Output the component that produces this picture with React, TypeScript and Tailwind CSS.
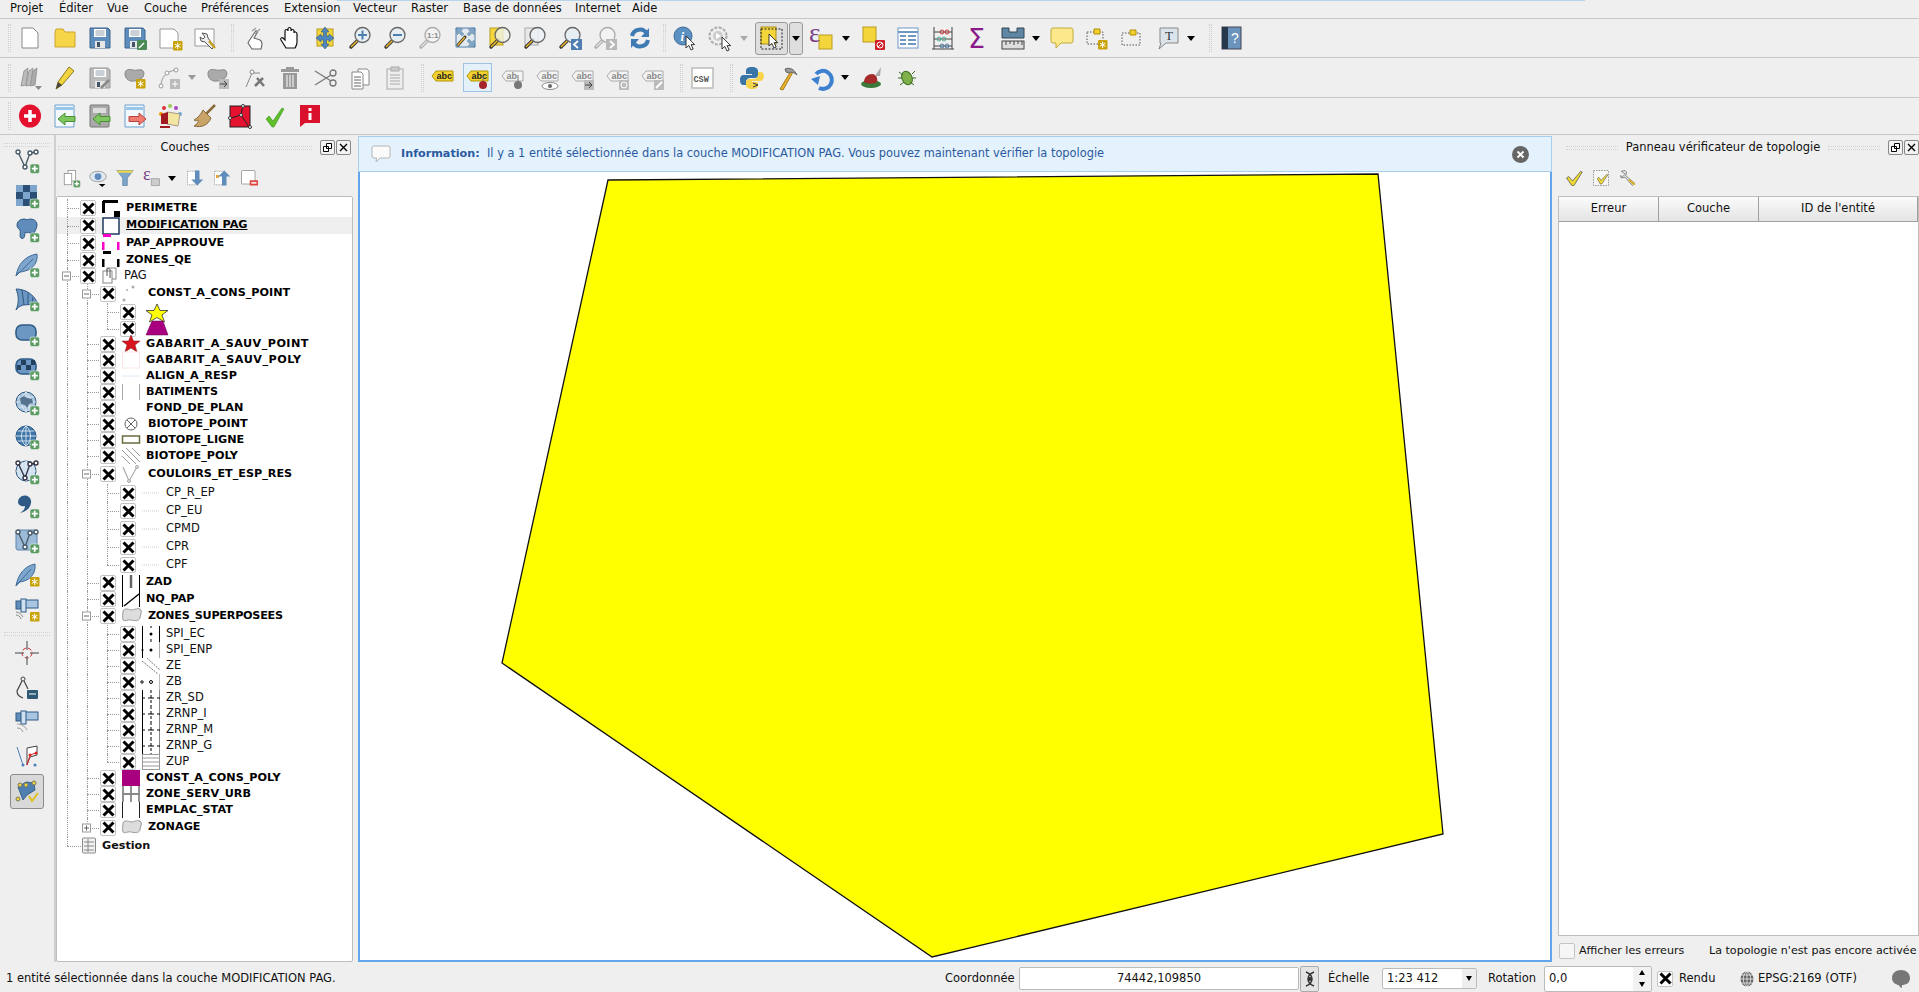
import type { ReactNode } from 'react'

// ---------- small svg helpers ----------
const Ico = ({ children, size = 24 }: { children: ReactNode; size?: number }) => (
  <svg width={size} height={size} viewBox="0 0 24 24" className="block overflow-visible">
    {children}
  </svg>
)

const Arrow = ({ x, y }: { x: number; y: number }) => (
  <path transform={`translate(${x} ${y})`} d="M0 0v12l2.800-2.600 2.200 4.600 2.200-1-2.100-4.400h3.600z" fill="#fff" stroke="#222" strokeWidth=".9" />
)
const Plus = () => (
  <g>
    <rect x="15" y="15" width="9.500" height="9.500" rx="2" fill="#5b9a62" stroke="#e8f2e8" strokeWidth=".6" />
    <path d="M19.700 16.800v6M16.800 19.700h6" stroke="#fff" strokeWidth="1.800" />
  </g>
)
const Snow = ({ x = 15, y = 15 }: { x?: number; y?: number }) => (
  <g transform={`translate(${x} ${y})`}>
    <rect width="9.500" height="9.500" rx="1" fill="#c9a208" />
    <path d="M4.700 1.500v6.500M1.900 3.100l5.600 3.300M7.500 3.100L1.900 6.400" stroke="#fff" strokeWidth="1" />
  </g>
)
const Mag = ({ fill = '#e6eef3', dim = false, children }: { fill?: string; dim?: boolean; children?: ReactNode }) => (
  <g>
    <path d="M10 14L3 21" stroke={dim ? '#aaa' : '#333'} strokeWidth="3.400" strokeLinecap="round" />
    <path d="M9.500 14.500L3.500 20.500" stroke={dim ? '#ddd' : '#e7b52c'} strokeWidth="1.600" strokeLinecap="round" />
    <circle cx="14.500" cy="9" r="7.500" fill={fill} stroke={dim ? '#aaa' : '#666'} strokeWidth="1.300" />
    {children}
  </g>
)
const Page = ({ stroke = '#888' }: { stroke?: string }) => (
  <path d="M4 2h11l5 5v15H4z" fill="#fff" stroke={stroke} strokeWidth="1" />
)
const Floppy = ({ c = '#5f8dbb', d = '#3e658e' }: { c?: string; d?: string }) => (
  <g>
    <path d="M2 2h18l2 2v18H2z" fill={c} stroke={d} />
    <rect x="6" y="3" width="12" height="8" fill="#fff" />
    <path d="M7.500 5h9M7.500 7h9M7.500 9h9" stroke="#789" strokeWidth=".8" />
    <rect x="7" y="15" width="10" height="7" fill="#e6e6e6" />
    <rect x="9" y="16" width="3" height="5" fill="#456" />
  </g>
)
const Blob = ({ c = '#aaa', d = '#888' }: { c?: string; d?: string }) => (
  <path d="M2 8c0-5 4-5 8-4 3 1 6-1 9 0 3 2 2 6 0 8-3 1-4 3-8 3-4 1-9-2-9-7z" fill={c} stroke={d} />
)
const Tag = ({ c = '#f3d22d', t = '#222', s = '#b29300', label = 'abc' }: { c?: string; t?: string; s?: string; label?: string }) => (
  <g>
    <path d="M5 5h17v10H5L1 10z" fill={c} stroke={s} />
    <text x="5.500" y="13" fontSize="9" fontWeight="700" fontFamily="Liberation Sans, sans-serif" fill={t}>{label}</text>
  </g>
)
const Globe = ({ c = '#3e75a8' }: { c?: string }) => (
  <g>
    <circle cx="11" cy="11" r="10" fill={c} stroke="#2c5880" />
    <path d="M1 11h20M3 6h16M3 16h16M11 1v20M11 1c-6 5-6 15 0 20M11 1c6 5 6 15 0 20" stroke="#dfeaf3" strokeWidth=".9" fill="none" />
  </g>
)
const Vee = ({ c = '#4a5a68' }: { c?: string }) => (
  <g fill="#fff" stroke={c} strokeWidth="1.400">
    <path d="M3 3l7 15 5-14 6-1" fill="none" />
    <circle cx="3" cy="3" r="2" /><circle cx="10" cy="18" r="2" /><circle cx="15" cy="4" r="2" /><circle cx="21" cy="3" r="2" />
  </g>
)
const Checker = ({ c = '#2c4f76', l = '#7ea6cc' }: { c?: string; l?: string }) => (
  <g>
    {[0, 1, 2].map((r) =>
      [0, 1, 2].map((q) => <rect key={`${r}${q}`} x={1 + q * 7} y={1 + r * 7} width="7" height="7" fill={(r + q) % 2 ? c : l} />)
    )}
  </g>
)

// ---------- toolbar icons ----------
const icons: Record<string, ReactNode> = {
  new: <Page />,
  open: <path d="M2 6l1-3h7l2 3h10v15H2z" fill="#f7d548" stroke="#c9a530" />,
  save: <Floppy />,
  saveas: <g><Floppy /><rect x="14" y="14" width="10" height="10" rx="1" fill="#4c8a55" /><path d="M16 22l5-5" stroke="#fff" strokeWidth="1.500" /></g>,
  print: <g><path d="M2 3h14l4 4v15H2z" fill="#fff" stroke="#999" /><Snow /></g>,
  manager: <g><path d="M2 3h19v17H2z" fill="#fff" stroke="#999" /><path d="M9 7l5 1 1 4 6 8-2 3-7-7-4-1-1-4 3 2 2-2z" fill="#eee" stroke="#555" /><path d="M16 15l6 7" stroke="#c9a020" strokeWidth="2.400" /></g>,
  touch: <g fill="none" stroke="#666" strokeWidth="1.100"><path d="M6 15l6-9c1-2 3-1 2 1l-3 5 6 2c2 1 2 3 2 5l-1 4H9l-4-6z" fill="#fff" /><path d="M9 5l4-3M12 8l5-5" stroke="#999" /></g>,
  pan: <path d="M8 22l-5-8c-1-2 1-3 2-2l2 2V5c0-2 3-2 3 0V3c0-2 3-2 3 0v2c0-2 3-2 3 0v2c0-2 3-1 3 1v8c0 3-1 4-2 6z" fill="#fff" stroke="#111" strokeWidth="1.200" />,
  pansel: <g><rect x="4" y="3" width="16" height="17" fill="#f4d63c" stroke="#b79b1c" /><path d="M12 1l4 5h-2.500v4H16V8l5 4-5 4v-2h-2.500v4H16l-4 5-4-5h2.500v-4H8v2l-5-4 5-4v2h2.500V6H8z" fill="#4f86bd" stroke="#2e5a87" strokeWidth=".6" /></g>,
  zoomin: <Mag><path d="M14.500 4.500v9M10 9h9" stroke="#4d7fb0" strokeWidth="2" /></Mag>,
  zoomout: <Mag><path d="M10 9h9" stroke="#4d7fb0" strokeWidth="2" /></Mag>,
  zoom11: <Mag fill="#f3f3f3" dim><text x="9" y="12" fontSize="8" fontWeight="700" fontFamily="Liberation Sans, sans-serif" fill="#888">1:1</text></Mag>,
  zoomfull: <g><path d="M3 2l7 1-2 2 3 3-2 2-3-3-2 2zM22 2l-1 7-2-2-3 3-2-2 3-3-2-2zM22 21l-7-1 2-2-3-3 2-2 3 3 2-2z" fill="#4f7ea8" stroke="#2e5a87" strokeWidth=".5" /><path d="M3 2h19v19H3z" fill="#cfe0ee66" stroke="#4f7ea8" /><path d="M12 11L5 19" stroke="#333" strokeWidth="3" strokeLinecap="round" /><path d="M11.500 11.500L5 19" stroke="#e7b52c" strokeWidth="1.500" strokeLinecap="round" /></g>,
  zoomsel: <g><rect x="2" y="2" width="13" height="17" fill="#f4d63c" stroke="#b79b1c" /><Mag fill="#eef2e6cc" /></g>,
  zoomlayer: <g><rect x="2" y="2" width="13" height="17" fill="#e8e8e8" stroke="#aaa" /><Mag fill="#eef2f6cc" /></g>,
  zoomlast: <g><Mag /><rect x="13" y="13" width="11" height="11" fill="#4f7eb3" /><path d="M20 15l-4 3.500 4 3.500" stroke="#fff" strokeWidth="1.800" fill="none" /></g>,
  zoomnext: <g><Mag dim fill="#f3f3f3" /><rect x="13" y="13" width="11" height="11" fill="#b8b8b8" /><path d="M17 15l4 3.500-4 3.500" stroke="#fff" strokeWidth="1.800" fill="none" /></g>,
  refresh: <g fill="none" strokeWidth="4"><path d="M4 10a8 8 0 0 1 15-2" stroke="#3f7ab3" /><path d="M20 14a8 8 0 0 1-15 2" stroke="#3f7ab3" /><path d="M21 2v9h-8zM3 22v-9h8z" fill="#3f7ab3" stroke="none" /></g>,
  identify: <g><circle cx="10" cy="10" r="9" fill="#5c8fc2" stroke="#3d6a96" /><text x="7.500" y="15" fontSize="13" fontWeight="700" fontStyle="italic" fontFamily="Liberation Serif, serif" fill="#fff">i</text><Arrow x={13} y={10} /></g>,
  action: <g><circle cx="10" cy="10" r="8.500" fill="#eee" stroke="#aaa" strokeWidth="2" strokeDasharray="3 1.500" /><circle cx="10" cy="10" r="5" fill="#ccc" /><path d="M8 7l5 3-5 3z" fill="#fff" /><Arrow x={14} y={11} /></g>,
  select: <g><rect x="1" y="1" width="15" height="17" fill="#f4d63c" stroke="#a88f14" /><rect x="1" y="3" width="21" height="20" fill="none" stroke="#222" strokeDasharray="2 1.500" /><Arrow x={9} y={8} /></g>,
  expr: <g><rect x="9" y="9" width="13" height="14" fill="#f4d63c" stroke="#b79b1c" /><text x="-1" y="16" fontSize="27" fontFamily="Liberation Serif, serif" fill="#7a3f87">&#949;</text></g>,
  deselect: <g><rect x="2" y="1" width="13" height="15" fill="#f4d63c" stroke="#b79b1c" /><rect x="14" y="14" width="10" height="10" rx="1" fill="#d0202a" /><circle cx="19" cy="19" r="3" fill="none" stroke="#fff" /><path d="M17 21l4-4" stroke="#fff" /></g>,
  table: <g><rect x="2" y="2" width="20" height="20" fill="#fff" stroke="#6b98c4" /><path d="M2 6h20M4 10h6M12 10h8M4 14h6M12 14h8M4 18h6M12 18h8" stroke="#6b98c4" strokeWidth="2" /></g>,
  stats: <g fill="none"><path d="M3 1v22M21 1v22M1 23h22M3 6h18M3 13h18M3 20h18" stroke="#444" /><circle cx="11" cy="6" r="2" stroke="#c33" /><circle cx="16" cy="6" r="2" stroke="#c33" /><circle cx="8" cy="13" r="2" stroke="#5a9" /><circle cx="13" cy="13" r="2" stroke="#5a9" /><circle cx="11" cy="20" r="2" stroke="#47a" /><circle cx="16" cy="20" r="2" stroke="#47a" /></g>,
  sigma: <text x="2" y="22" fontSize="27" fontFamily="DejaVu Sans, sans-serif" fill="#8a1a8a">&#931;</text>,
  measure: <g><path d="M1 2h7v4h8V2h7v10H1z" fill="#5f87a3" stroke="#345" /><rect x="1" y="15" width="22" height="8" fill="#ddd" stroke="#444" /><path d="M5 15v4M9 15v3M13 15v4M17 15v3M21 15v4" stroke="#444" /></g>,
  tip: <path d="M3 2h18a2 2 0 0 1 2 2v11a2 2 0 0 1-2 2H11l-5 5v-5H3a2 2 0 0 1-2-2V4a2 2 0 0 1 2-2z" fill="#fbe98c" stroke="#c3a93a" />,
  annot: <g><rect x="2" y="6" width="16" height="12" fill="none" stroke="#555" strokeDasharray="1.500 1.500" /><path d="M9 6V3h6v5H9z" fill="#f0d030" stroke="#b09000" /><Snow x={13} y={14} /></g>,
  annot2: <g><rect x="2" y="7" width="18" height="12" fill="none" stroke="#555" strokeDasharray="1.500 1.500" /><path d="M10 7V4h6v5h-6z" fill="#f0d030" stroke="#b09000" /></g>,
  text: <g><path d="M3 2h18v15H9l-7 6 2-6H3z" fill="#dbe4ea" stroke="#888" /><text x="8" y="14" fontSize="13" fontFamily="Liberation Serif, serif" fill="#333">T</text></g>,
  help: <g><rect x="3" y="1" width="19" height="22" fill="#6b94bd" stroke="#445" /><rect x="3" y="1" width="6" height="22" fill="#25384c" /><text x="12" y="17" fontSize="14" fontFamily="Liberation Sans, sans-serif" fill="#fff">?</text></g>,
  // second row
  edits: <g stroke="#999" fill="#bbb"><path d="M3 20l3-15 4-3-2 17zM8 20l3-15 4-3-2 17z" /><path d="M12 20l3-15 4-3-2 17z" fill="#aaa" /><path d="M17 20h7l-3.500 4z" fill="#888" stroke="none" /></g>,
  pencil: <g><path d="M3 23l2-7L16 1l5 4L9 19z" fill="#f1d340" stroke="#8a7a20" /><path d="M3 23l2-7 4 3z" fill="#444" /></g>,
  savegray: <g><Floppy c="#bbb" d="#999" /><path d="M13 22l8-8" stroke="#888" strokeWidth="2.500" /></g>,
  addfeat: <g><Blob /><Snow x={13} y={13} /></g>,
  vert: <g stroke="#999" fill="#fff"><path d="M3 20c0-9 6-15 15-16" fill="none" /><circle cx="3" cy="20" r="2" /><circle cx="9" cy="7" r="2" /><circle cx="18" cy="4" r="2" /><rect x="12" y="13" width="10" height="10" fill="#bbb" stroke="none" /><path d="M17 15v6M14 18h6" stroke="#fff" /></g>,
  movefeat: <g><Blob /><rect x="13" y="13" width="10" height="10" fill="#bbb" /><path d="M14 18h6M18 15l3 3-3 3" stroke="#444" fill="none" /></g>,
  nodes: <g><path d="M3 21l6-14M9 7l8 0" stroke="#888" fill="none" /><circle cx="9" cy="6" r="2" fill="#fff" stroke="#888" /><path d="M12 20l8-8M14 12l7 8" stroke="#777" strokeWidth="2.500" /></g>,
  trash: <g fill="#999"><rect x="8" y="1" width="8" height="3" /><rect x="3" y="3" width="18" height="3" /><path d="M5 7h14v16H5z" /><path d="M9 9v12M12 9v12M15 9v12" stroke="#eee" strokeWidth="1.200" /></g>,
  cut: <g fill="none" stroke="#777" strokeWidth="1.300"><path d="M2 5l16 10M2 19l16-10" /><circle cx="20" cy="7" r="3" /><circle cx="20" cy="17" r="3" /></g>,
  copy: <g stroke="#888" fill="#fff"><path d="M10 3h9l2 2v14H10z" /><path d="M4 6h9l2 2v15H4z" /><path d="M6 11h7M6 14h7M6 17h7M6 20h7" stroke="#666" /></g>,
  paste: <g stroke="#aaa" fill="#eee"><rect x="4" y="3" width="16" height="20" /><rect x="8" y="1" width="8" height="4" fill="#ccc" /><path d="M7 9h10M7 12h10M7 15h10M7 18h10" /></g>,
  abc: <Tag />,
  abcpin: <g><Tag /><path d="M17 10v6" stroke="#777" /><circle cx="17" cy="19" r="4" fill="#a5232a" /></g>,
  abcgray: <g><Tag c="#f4f4f4" t="#888" s="#aaa" label="ab" /><path d="M17 9v6" stroke="#777" /><circle cx="17" cy="19" r="4" fill="#777" /></g>,
  abceye: <g><Tag c="#f4f4f4" t="#888" s="#aaa" /><ellipse cx="14" cy="20" rx="8" ry="3.500" fill="#fff" stroke="#888" /><circle cx="14" cy="20" r="2" fill="#666" /></g>,
  abcmove: <g><Tag c="#f4f4f4" t="#888" s="#aaa" /><rect x="13" y="14" width="10" height="10" fill="#bbb" /><path d="M14 19h6M18 16l3 3-3 3" stroke="#444" fill="none" /></g>,
  abcrot: <g><Tag c="#f4f4f4" t="#888" s="#aaa" /><rect x="13" y="14" width="10" height="10" fill="#bbb" /><circle cx="18" cy="19" r="3" fill="none" stroke="#fff" /></g>,
  abcedit: <g><Tag c="#f4f4f4" t="#888" s="#aaa" /><rect x="13" y="14" width="10" height="10" fill="#bbb" /><path d="M15 22l6-6" stroke="#fff" strokeWidth="2" /></g>,
  csw: <g><rect x="2" y="2" width="21" height="20" fill="#fff" stroke="#bbb" strokeWidth="1.500" /><text x="3.500" y="15.500" fontSize="8.500" fontWeight="700" fontFamily="Liberation Mono, monospace" fill="#555">CSW</text></g>,
  python: <g><path d="M12 1c-5 0-6 2-6 4v3h6v1H4c-3 0-4 2-4 5s1 5 4 5h2v-3c0-2 2-4 4-4h5c2 0 3-1 3-3V5c0-2-2-4-6-4z" fill="#3a75a8" /><path d="M12 23c5 0 6-2 6-4v-3h-6v-1h8c2 0 4-2 4-5 0-2-1-4-4-4h-2v3c0 2-2 4-4 4H9c-2 0-3 1-3 3v3c0 2 2 4 6 4z" fill="#f8d44c" /><path d="M13 17l5 2-5 2" stroke="#333" fill="none" /></g>,
  hammer: <g><path d="M5 23l11-18 2 1L8 24z" fill="#e8b12e" stroke="#a97a14" /><path d="M10 3c5-2 9 0 12 6-3-3-6-3-8-2l-3-1z" fill="#999" stroke="#666" /></g>,
  undo: <g fill="none"><path d="M6 8a9 9 0 1 1 3 14" stroke="#3d80d0" strokeWidth="4" /><path d="M1 13l9-3-2 9z" fill="#3d80d0" /></g>,
  meat: <g><ellipse cx="11" cy="18" rx="10" ry="4" fill="#3a7a3a" /><path d="M4 16c0-5 4-8 8-8 4 0 6 4 5 8-3 2-10 2-13 0z" fill="#a52a2a" /><path d="M15 10l6-9-1 9z" fill="#aaa" /></g>,
  bug: <g stroke="#3a6b1e"><ellipse cx="12" cy="12" rx="5" ry="7" fill="#7fb04a" transform="rotate(-25 12 12)" /><path d="M4 6l4 3M3 12h4M5 19l4-3M20 5l-3 3M21 12h-4M19 19l-4-3" fill="none" /></g>,
  // third row
  addred: <g><ellipse cx="12" cy="12" rx="11" ry="11.500" fill="#e4112f" /><path d="M12 6v12M6 12h12" stroke="#fff" strokeWidth="3.500" /></g>,
  arrowin: <g><path d="M2 1h19v22H2z" fill="#f2f8fc" stroke="#6aa0cf" /><rect x="3" y="3" width="17" height="3" fill="#9ac6ea" /><path d="M5 15l7-6v3.500h10v5H12V21z" fill="#7ec660" stroke="#4b8f35" /></g>,
  arrowcab: <g><rect x="2" y="1" width="19" height="22" rx="1" fill="#aaa" stroke="#777" /><rect x="5" y="4" width="13" height="5" fill="#ddd" /><path d="M5 15l7-6v3.500h10v5H12V21z" fill="#7ec660" stroke="#4b8f35" /></g>,
  arrowout: <g><path d="M2 1h19v22H2z" fill="#f2f8fc" stroke="#6aa0cf" /><rect x="3" y="3" width="17" height="3" fill="#9ac6ea" /><path d="M23 15l-7-6v3.500H6v5h10V21z" fill="#f07a70" stroke="#b6463d" /></g>,
  paint: <g><circle cx="6" cy="4" r="2" fill="#d33" /><circle cx="12" cy="2" r="2" fill="#9c5" /><circle cx="18" cy="4" r="2" fill="#a4c" /><circle cx="22" cy="10" r="2" fill="#6ad" /><circle cx="3" cy="10" r="2" fill="#e90" /><path d="M9 8l13 2-2 12-11-2z" fill="#f3e6a0" stroke="#a98" /><path d="M3 10l7-2v12H3z" fill="#a01c22" /><path d="M2 23h10" stroke="#a01c22" strokeWidth="2" /></g>,
  broom: <g><path d="M22 1L12 11" stroke="#8a6a3a" strokeWidth="2.500" /><path d="M10 6l8 8c-3 7-9 10-17 8 3-2 5-4 4-6-2 1-3 1-4 0 4-2 7-6 9-10z" fill="#c8a468" stroke="#8a6a3a" /></g>,
  polyred: <g><rect x="2" y="2" width="20" height="21" fill="#e4112f" stroke="#222" /><path d="M15 1l-2 10-10 3M13 11l8 12" stroke="#222" fill="none" /><g fill="#fff" stroke="#333"><circle cx="15" cy="2" r="1.500" /><circle cx="2" cy="14" r="1.500" /><circle cx="13" cy="11" r="1.500" /><circle cx="22" cy="23" r="1.500" /></g></g>,
  check: <path d="M3 15l3-3 4 5 9-13 2 1-10 18H9z" fill="#5dc02a" stroke="#3d8f18" strokeWidth=".6" />,
  infored: <g><path d="M2 1h20v18H7l-5 4z" fill="#d9112c" /><rect x="10.500" y="4" width="3" height="3" fill="#fff" /><rect x="10.500" y="9" width="3" height="7" fill="#fff" /></g>,
}

// ---------- left toolbar icons ----------
const sideIcons: ReactNode[] = [
  <g key="a"><Vee /><Plus /></g>,
  <g key="b"><Checker /><Plus /></g>,
  <g key="c"><path d="M2 7c0-6 8-7 10-5 3-2 10-1 10 5 0 4-3 6-3 10-2 3-4 0-4-3-2 1-4 1-5 0 0 4-1 8-4 6-2-2 0-6-1-8-1-1-3-2-3-5z" fill="#5f8cba" stroke="#2f5a86" /><Plus /></g>,
  <g key="d"><path d="M1 23C3 11 10 3 22 1c1 7-3 15-12 17-3 1-6 1-7 2z" fill="#7ea6cc" stroke="#3f6c99" /><path d="M1 23L18 6" stroke="#3f6c99" /><Plus /></g>,
  <g key="e"><path d="M1 2c9 0 18 5 22 15l-15 1c-3 1-6 3-7 5 3-7 3-14 0-21z" fill="#6c97c2" stroke="#2f5a86" /><path d="M7 3l2 15M13 6l0 12M18 10l-1 7" stroke="#2f5a86" /><Plus /></g>,
  <g key="f"><rect x="1" y="3" width="20" height="15" rx="6" fill="#6c97c2" stroke="#2f5a86" strokeWidth="1.600" /><Plus /></g>,
  <g key="g"><rect x="1" y="3" width="20" height="15" rx="6" fill="#6c97c2" stroke="#2f5a86" strokeWidth="1.600" /><path d="M6 4h5v5H6zM11 9h5v5h-5zM16 4h4v5h-4zM2 9h4v5H2z" fill="#24405f" /><Plus /></g>,
  <g key="h"><Globe c="#a8c4dc" /><path d="M5 7l4-2 3 2 5 1 1 4-4 1-2 4-2-3-4-1z" fill="#55738f" /><Plus /></g>,
  <g key="i"><Globe /><Plus /></g>,
  <g key="j"><Globe c="#cfe0ee" /><Vee c="#334" /><Plus /></g>,
  <g key="k"><path d="M7 2c5-2 10 2 9 7-1 6-6 9-11 10 3-2 5-4 5-7-3 1-7-1-7-4 0-3 2-5 4-6z" fill="#2f5a86" /><Plus /></g>,
  <g key="l"><rect x="1" y="1" width="21" height="20" rx="2" fill="#9bbbd8" stroke="#5f86ac" /><Vee /><Plus /></g>,
  <g key="m"><path d="M1 23C3 11 10 3 20 1c1 7-3 15-11 17-3 1-5 1-6 2z" fill="#7ea6cc" stroke="#3f6c99" /><path d="M1 23L16 6" stroke="#3f6c99" /><Snow x={15} y={14} /></g>,
  <g key="n"><rect x="9" y="2" width="14" height="8" fill="#a8c6e2" stroke="#2f5a86" /><rect x="1" y="3" width="6" height="8" fill="#5f8cba" stroke="#2f5a86" /><rect x="6" y="1" width="5" height="13" fill="#cfe0ee" stroke="#2f5a86" /><path d="M1 14c3 0 5 2 7 5M1 17c2 0 4 1 5 4" stroke="#888" fill="none" /><Snow x={15} y={14} /></g>,
]
const sideIcons2: ReactNode[] = [
  <g key="a"><circle cx="12" cy="12" r="5" fill="none" stroke="#c33" strokeDasharray="4 2" /><path d="M12 0v9M12 15v9M0 12h9M15 12h9" stroke="#444" /></g>,
  <g key="b"><circle cx="8" cy="3" r="2" fill="none" stroke="#444" /><path d="M7 5l-5 10c0 4 3 6 6 7M9 5l4 8" fill="none" stroke="#444" strokeWidth="1.200" /><rect x="12" y="14" width="11" height="9" rx="1" fill="#2f5a76" /><path d="M14 18h7" stroke="#fff" /></g>,
  <g key="c"><rect x="9" y="2" width="14" height="8" fill="#a8c6e2" stroke="#2f5a86" /><rect x="1" y="3" width="6" height="8" fill="#5f8cba" stroke="#2f5a86" /><rect x="6" y="1" width="5" height="13" fill="#cfe0ee" stroke="#2f5a86" /><path d="M2 14c4 0 8 2 10 6M2 18c3 0 5 1 6 4" stroke="#999" fill="none" /></g>,
  <g key="d"><path d="M2 2l6 18" stroke="#4a7fb8" fill="none" /><path d="M12 3l10-2 0 9-7 2-3 8z" fill="#fff" stroke="#444" /><path d="M12 20l3-10 6-2" stroke="#d22" fill="none" /><circle cx="15" cy="10" r="1.500" fill="#d22" /><circle cx="21" cy="8" r="1.500" fill="#d22" /><circle cx="8" cy="20" r="1.500" fill="#4a7fb8" /><circle cx="20" cy="20" r="1.500" fill="#4a7fb8" /></g>,
  <g key="e"><path d="M3 8l8-5 8 1 1 7-8 5-4 5z" fill="#4f7fb0" stroke="#3a6288" /><g fill="#f4d63c" stroke="#776"><circle cx="5" cy="6" r="2" /><circle cx="11" cy="6" r="2" /><circle cx="19" cy="4" r="2" /><circle cx="3" cy="20" r="2" /></g><path d="M14 17l3 5 6-8" fill="none" stroke="#e0c020" strokeWidth="2" /></g>,
]

// ---------- layer tree symbols ----------
const Sym = ({ children }: { children: ReactNode }) => (
  <svg width="18" height="16" viewBox="0 0 18 16" className="block overflow-visible">{children}</svg>
)
const dash = (c: string) => (
  <g fill={c}>
    <rect x="1" y="-1" width="8" height="3" />
    <rect x="0" y="7" width="2.500" height="8" />
    <rect x="15" y="7" width="2.500" height="8" />
  </g>
)
const syms: Record<string, ReactNode> = {
  perimetre: <g><path d="M1 1.500h15M1.500 1v12" stroke="#000" strokeWidth="3" fill="none" /><rect x="12" y="11" width="6" height="6" fill="#000" /></g>,
  modif: <rect x="1" y="0" width="16" height="16" fill="#fff" stroke="#1f3a5f" strokeWidth="1.500" />,
  pap: dash('#ff00cc'),
  qe: dash('#000'),
  pag: <g fill="#fff" stroke="#888"><rect x="5" y="0" width="9" height="11" /><rect x="1" y="3" width="9" height="12" /><path d="M5 8V2c0-2 3-2 3 0v8" fill="none" stroke="#555" /></g>,
  points: <g fill="#aaa"><circle cx="2" cy="14" r="1.500" /><circle cx="5" cy="4" r="1" /><circle cx="11" cy="1" r="1.500" /></g>,
  star: <path d="M15 0l3 6.500h8l-6 4.500 2.500 7-7.500-4.500-7.500 4.500L10 11l-6-4.500h8z" fill="#ff0" stroke="#333" strokeWidth=".8" />,
  tri: <path d="M10 0h11l5 14H4z" fill="#a8007e" stroke="#60004a" strokeWidth=".5" />,
  redstar: <path d="M9 -1l2.500 6H18l-5 4 2 7-6-4-6 4 2-7-5-4h6.500z" fill="#d8141c" stroke="#7a1a20" strokeWidth=".5" />,
  gabpoly: <rect x="0.500" y="0" width="17" height="16" fill="#fff" stroke="#fde6e6" />,
  align: <path d="M0 8h18" stroke="#dce8f2" />,
  bat: <path d="M.500 0v16M17.500 0v16" stroke="#aaa" />,
  biop: <g stroke="#666" fill="#fff"><circle cx="9" cy="8" r="6" /><path d="M5 4l8 8M13 4l-8 8" /></g>,
  bligne: <g><rect x="0.500" y="4" width="17" height="7" fill="#fff" stroke="#6b6b3e" strokeWidth="1.500" /></g>,
  bpoly: <g stroke="#999"><path d="M0 2l14 14M0 8l8 8M4 0l14 14M10 0l8 8" /></g>,
  vline: <g stroke="#aaa" fill="#ddd"><path d="M1 1l6 14L15 1" fill="none" strokeWidth="1.200" /><circle cx="7" cy="15" r="1.500" /><circle cx="15" cy="1" r="1.500" /></g>,
  dots: <path d="M0 8h18" stroke="#ccc" strokeDasharray="1 1" />,
  zad: <g><path d="M.500 0v16M17.500 0v16" stroke="#000" /><path d="M9 0v13" stroke="#666" strokeWidth="2.500" /></g>,
  nq: <g><path d="M.500 0v16M17.500 0v16" stroke="#000" /><path d="M2 15L17 3" stroke="#000" strokeWidth="1.400" /></g>,
  blob: <path d="M1 3c1-3 5-2 8-1 3 0 8-3 10 0 1 3-1 5-1 8-1 3-5 3-9 2-3-1-6 2-8 0-1-3 0-6 0-9z" fill="#ddd" stroke="#999" />,
  spi: <g><path d="M.500 0v16M17.500 0v16" stroke="#000" /><path d="M9 0v2M9 13v3" stroke="#000" /><circle cx="9" cy="8" r="1.500" fill="#000" /></g>,
  spi2: <g><path d="M.500 0v16" stroke="#000" /><path d="M17.500 0v16" stroke="#aaa" /><circle cx="9" cy="8" r="1.500" fill="#000" /><circle cx="0.500" cy="8" r="1" fill="#000" /></g>,
  ze: <g stroke="#777" strokeDasharray="2 1"><path d="M0 3l16 13M5 0l13 12" /></g>,
  zb: <g fill="#fff" stroke="#000"><circle cx="9" cy="8" r="1.500" /><circle cx="0" cy="8" r="1.200" /><path d="M17.500 0v16" stroke="#bbb" /></g>,
  zr: <g stroke="#000"><path d="M.500 0v16" /><path d="M17.500 0v16" stroke="#888" /><path d="M9 0v16" strokeDasharray="3 2" /><path d="M0 8h3M6 8h6M15 8h3" /></g>,
  zup: <g stroke="#999"><rect x="0.500" y="0.500" width="17" height="15" fill="#fff" /><path d="M0 4h18M0 8h18M0 12h18" /></g>,
  cpoly: <rect x="0" y="0" width="18" height="16" fill="#a8007e" />,
  serv: <g stroke="#888" strokeWidth="1.800" fill="none"><path d="M1 0v16M9 0v16M17 0v16M0 8h18" /></g>,
  emplac: <path d="M.500 0v16M17.500 0v16" stroke="#222" />,
  gest: <g stroke="#888" fill="#f2f2f2"><rect x="0.500" y="0" width="13" height="15" rx="1" /><path d="M2 4h10M2 8h10M2 12h10M6 1v13" /></g>,
}

type Row = {
  label: string
  sym?: string
  level: 0 | 1 | 2
  h: string
  bold?: boolean
  box?: '-' | '+'
  last?: boolean
  inPag?: boolean
  selected?: boolean
  track?: string
}

const b = (label: string, sym: string, h = 'h-[16px]', extra: Partial<Row> = {}): Row => ({ label, sym, level: 1, h, bold: true, inPag: true, ...extra })
const c = (label: string, sym: string, h = 'h-[16px]', extra: Partial<Row> = {}): Row => ({ label, sym, level: 2, h, inPag: true, ...extra })

const rows: Row[] = [
  { label: 'PERIMETRE', sym: 'perimetre', level: 0, h: 'h-[18px]', bold: true },
  { label: 'MODIFICATION PAG', sym: 'modif', level: 0, h: 'h-[17px]', bold: true, selected: true },
  { label: 'PAP_APPROUVE', sym: 'pap', level: 0, h: 'h-[18px]', bold: true },
  { label: 'ZONES_QE', sym: 'qe', level: 0, h: 'h-[16px]', bold: true },
  { label: 'PAG', sym: 'pag', level: 0, h: 'h-[16px]', box: '-' },
  b('CONST_A_CONS_POINT', 'points', 'h-[19px]', { box: '-' }),
  c('', 'star', 'h-[18px]'),
  c('', 'tri', 'h-[15px]', { last: true }),
  b('GABARIT_A_SAUV_POINT', 'redstar', 'h-[16px]', { track: 'tracking-[0.450px]' }),
  b('GABARIT_A_SAUV_POLY', 'gabpoly', 'h-[16px]', { track: 'tracking-[0.500px]' }),
  b('ALIGN_A_RESP', 'align'),
  b('BATIMENTS', 'bat'),
  b('FOND_DE_PLAN', ''),
  b('BIOTOPE_POINT', 'biop'),
  b('BIOTOPE_LIGNE', 'bligne'),
  b('BIOTOPE_POLY', 'bpoly'),
  b('COULOIRS_ET_ESP_RES', 'vline', 'h-[20px]', { box: '-' }),
  c('CP_R_EP', 'dots', 'h-[18px]'),
  c('CP_EU', 'dots', 'h-[18px]'),
  c('CPMD', 'dots', 'h-[18px]'),
  c('CPR', 'dots', 'h-[18px]'),
  c('CPF', 'dots', 'h-[18px]', { last: true }),
  b('ZAD', 'zad', 'h-[17px]'),
  b('NQ_PAP', 'nq'),
  b('ZONES_SUPERPOSEES', 'blob', 'h-[18px]', { box: '-', track: 'tracking-[-0.250px]' }),
  c('SPI_EC', 'spi', 'h-[17px]'),
  c('SPI_ENP', 'spi2'),
  c('ZE', 'ze'),
  c('ZB', 'zb'),
  c('ZR_SD', 'zr'),
  c('ZRNP_I', 'zr'),
  c('ZRNP_M', 'zr'),
  c('ZRNP_G', 'zr'),
  c('ZUP', 'zup', 'h-[16px]', { last: true }),
  b('CONST_A_CONS_POLY', 'cpoly'),
  b('ZONE_SERV_URB', 'serv'),
  b('EMPLAC_STAT', 'emplac'),
  b('ZONAGE', 'blob', 'h-[19px]', { box: '+', last: true }),
]

const Cross = () => (
  <span className="flex h-4 w-4 shrink-0 items-center justify-center rounded-[2px] border border-[#c4c4c4] bg-white">
    <svg width="13" height="13" viewBox="0 0 13 13"><path d="M1.500 1.500l10 10M11.500 1.500l-10 10" stroke="#000" strokeWidth="3" /></svg>
  </span>
)

const VGuide = ({ x, half }: { x: string; half?: boolean }) => (
  <span className={`absolute top-0 w-0 border-l border-dotted border-[#999] ${x} ${half ? 'h-1/2' : 'h-full'}`} />
)

const ExpandBox = ({ x, kind }: { x: string; kind: '-' | '+' }) => (
  <span className={`absolute top-1/2 z-10 flex h-[9px] w-[9px] -translate-y-1/2 items-center justify-center border border-[#999] bg-white ${x}`}>
    <span className="h-px w-[5px] bg-[#666]" />
    {kind === '+' && <span className="absolute h-[5px] w-px bg-[#666]" />}
  </span>
)

function TreeRow({ row }: { row: Row }) {
  const pad = row.level === 0 ? 'pl-[23px]' : row.level === 1 ? 'pl-[43px]' : 'pl-[63px]'
  const tick = row.level === 0 ? 'left-[10px]' : row.level === 1 ? 'left-[30px]' : 'left-[50px]'
  const labelGap = row.label === 'PAG' ? 'ml-[4px]' : row.box || row.sym === 'biop' ? 'ml-[8px]' : 'ml-[6px]'
  return (
    <div className={`relative flex items-center ${row.h} ${pad} ${row.selected ? 'bg-[#efefef]' : ''}`}>
      <VGuide x="left-[10px]" />
      {row.inPag && <VGuide x="left-[30px]" half={row.level === 1 && row.last} />}
      {row.level === 2 && <VGuide x="left-[50px]" half={row.last} />}
      <span className={`absolute top-1/2 h-0 w-[12px] border-t border-dotted border-[#999] ${tick}`} />
      {row.box && <ExpandBox x={row.level === 0 ? 'left-[5px]' : 'left-[25px]'} kind={row.box} />}
      <span className="relative"><Cross /></span>
      <span className="relative ml-[6px] w-[18px] shrink-0">
        {row.sym ? <Sym>{syms[row.sym]}</Sym> : null}
      </span>
      <span className={`relative whitespace-nowrap ${labelGap} ${row.track ?? ''} ${row.bold ? 'text-[11.200px] font-bold text-black' : 'text-[#111]'} ${row.selected ? 'underline' : ''}`}>
        {row.label}
      </span>
    </div>
  )
}

// ---------- toolbar bits ----------
const Grip = () => <span className="mx-px h-[28px] w-[3px] shrink-0 border-x border-dotted border-[#cfcfcf]" />
const GripH = ({ className = '' }: { className?: string }) => (
  <span className={`h-[4px] border-y border-dotted border-[#d2d2d2] ${className}`} />
)
const Btn = ({ name, ml = '' }: { name: string; ml?: string }) => (
  <span className={`flex h-[35px] w-[35px] shrink-0 items-center justify-center ${ml}`}>
    <Ico>{icons[name]}</Ico>
  </span>
)
const Drop = ({ w = 'w-[12px]', color = 'border-t-black' }: { w?: string; color?: string }) => (
  <span className={`flex h-[35px] shrink-0 items-center justify-center ${w}`}>
    <span className={`h-0 w-0 border-x-[4px] border-t-[5px] border-x-transparent ${color}`} />
  </span>
)

const Close = () => (
  <svg width="9" height="9" viewBox="0 0 9 9"><path d="M1 1l7 7M8 1L1 8" stroke="#000" strokeWidth="1.400" /></svg>
)
const Float = () => (
  <svg width="9" height="9" viewBox="0 0 9 9"><path d="M3.500.500h5v5h-5zM.500 3.500h5v5h-5z" fill="#fff" stroke="#000" /></svg>
)
const DockBtns = () => (
  <span className="flex gap-px">
    <span className="flex h-[15px] w-[15px] items-center justify-center rounded-[2px] border border-[#888] bg-[#f2f2f2]"><Float /></span>
    <span className="flex h-[15px] w-[15px] items-center justify-center rounded-[2px] border border-[#888] bg-[#f2f2f2]"><Close /></span>
  </span>
)

const menu = [
  ['Projet', 'w-[49px]'], ['Éditer', 'w-[48px]'], ['Vue', 'w-[37px]'], ['Couche', 'w-[57px]'], ['Préférences', 'w-[83px]'],
  ['Extension', 'w-[69px]'], ['Vecteur', 'w-[58px]'], ['Raster', 'w-[52px]'], ['Base de données', 'w-[112px]'], ['Internet', 'w-[57px]'], ['Aide', 'w-[40px]'],
]

export default function App() {
  return (
    <div className="flex h-[992px] w-[1919px] flex-col overflow-hidden bg-[#efefef] font-['DejaVu_Sans',sans-serif] text-[11.500px] text-[#111]">
      {/* menu */}
      <div className="relative flex h-[19px] shrink-0 items-center border-b border-[#c8c8c8] pl-[10px]">
        <span className="absolute left-[337px] top-0 h-px w-[1248px] bg-[#b9d3ea]" />
        {menu.map(([m, w]) => (
          <span key={m} className={`${w} whitespace-nowrap`}>{m}</span>
        ))}
      </div>

      {/* toolbar 1 */}
      <div className="flex h-[39px] shrink-0 items-center border-b border-[#c8c8c8] pl-[7px]">
        <Grip />
        {['new', 'open', 'save', 'saveas', 'print', 'manager'].map((n) => <Btn key={n} name={n} />)}
        <span className="ml-[8px] mr-[2px] flex"><Grip /></span>
        {['touch', 'pan', 'pansel', 'zoomin', 'zoomout', 'zoom11', 'zoomfull', 'zoomsel', 'zoomlayer', 'zoomlast', 'zoomnext', 'refresh'].map((n) => <Btn key={n} name={n} />)}
        <span className="ml-[5px] flex"><Grip /></span>
        <Btn name="identify" />
        <Btn name="action" />
        <Drop w="w-[14px]" color="border-t-[#aaa]" />
        <span className="ml-[4px] flex h-[33px] w-[33px] shrink-0 items-center justify-center rounded-[3px] border border-[#9a9a9a] bg-[#dedede]"><Ico>{icons.select}</Ico></span>
        <span className="ml-px flex h-[33px] w-[14px] shrink-0 items-center justify-center rounded-[3px] border border-[#9a9a9a] bg-[#dedede]">
          <span className="h-0 w-0 border-x-[4px] border-t-[5px] border-x-transparent border-t-black" />
        </span>
        <Btn name="expr" ml="ml-px" />
        <Drop w="w-[14px]" />
        <Btn name="deselect" ml="ml-[2px]" />
        {['table', 'stats', 'sigma', 'measure'].map((n) => <Btn key={n} name={n} />)}
        <Drop />
        <Btn name="tip" ml="ml-[2px]" />
        <Btn name="annot" />
        <Btn name="annot2" />
        <Btn name="text" ml="ml-[2px]" />
        <Drop w="w-[10px]" />
        <span className="ml-[12px] flex"><Grip /></span>
        <Btn name="help" />
      </div>

      {/* toolbar 2 */}
      <div className="flex h-[40px] shrink-0 items-center border-b border-[#c8c8c8] pl-[7px]">
        <Grip />
        {['edits', 'pencil', 'savegray', 'addfeat', 'vert'].map((n) => <Btn key={n} name={n} />)}
        <Drop w="w-[10px]" color="border-t-[#999]" />
        <Btn name="movefeat" ml="ml-[3px]" />
        <Btn name="nodes" ml="ml-[2px]" />
        {['trash', 'cut', 'copy', 'paste'].map((n) => <Btn key={n} name={n} />)}
        <span className="ml-[8px] flex"><Grip /></span>
        <Btn name="abc" />
        <span className="mx-[3px] flex h-[29px] w-[29px] shrink-0 items-center justify-center border border-[#9cc2e6] bg-[#e4f0fa]"><Ico>{icons.abcpin}</Ico></span>
        {['abcgray', 'abceye', 'abcmove', 'abcrot', 'abcedit'].map((n) => <Btn key={n} name={n} />)}
        <span className="ml-[9px] flex"><Grip /></span>
        <Btn name="csw" />
        <span className="ml-[10px] flex"><Grip /></span>
        {['python', 'hammer', 'undo'].map((n) => <Btn key={n} name={n} />)}
        <Drop />
        <Btn name="meat" ml="ml-[3px]" />
        <Btn name="bug" />
      </div>

      {/* toolbar 3 */}
      <div className="flex h-[37px] shrink-0 items-center border-b border-[#c8c8c8] pl-[7px]">
        <Grip />
        {['addred', 'arrowin', 'arrowcab', 'arrowout', 'paint', 'broom', 'polyred', 'check', 'infored'].map((n) => <Btn key={n} name={n} />)}
      </div>

      <div className="flex min-h-0 flex-1">
        {/* left vertical toolbar */}
        <div className="flex w-[54px] shrink-0 flex-col items-center pt-[8px]">
          <GripH className="w-[46px]" />
          <div className="-mt-[3px] flex w-full flex-col items-center">
            {sideIcons.map((ic, i) => (
              <span key={i} className="flex h-[34.500px] items-center justify-center"><Ico size={24}>{ic}</Ico></span>
            ))}
          </div>
          <div className="flex h-[9px] items-end"><GripH className="w-[46px]" /></div>
          <div className="flex w-full flex-col items-center">
            {sideIcons2.map((ic, i) => (
              <span key={i} className={`flex h-[34.500px] w-[34px] items-center justify-center rounded-[3px] ${i === 4 ? 'border border-[#8c8c8c] bg-[#d9d9d9]' : ''}`}><Ico size={24}>{ic}</Ico></span>
            ))}
          </div>
        </div>
        <span className="w-[2px] shrink-0 bg-[#cfcfcf]" />

        {/* layers dock */}
        <div className="flex w-[297px] shrink-0 flex-col">
          <div className="flex h-[25px] shrink-0 items-center gap-2 px-[2px]">
            <GripH className="flex-1" />
            <span>Couches</span>
            <GripH className="flex-1" />
            <DockBtns />
          </div>
          <div className="flex h-[36px] shrink-0 items-center pl-[1.500px]">
            <span className="flex w-[27px] justify-center"><Ico size={18}><g fill="#fff" stroke="#888"><rect x="8" y="2" width="10" height="14" /><rect x="3" y="6" width="10" height="15" /></g><Plus /></Ico></span>
            <span className="flex w-[27px] justify-center"><Ico size={18}><ellipse cx="12" cy="10" rx="11" ry="7" fill="#dfe8ef" stroke="#888" /><circle cx="12" cy="10" r="4.500" fill="#5f8cba" /><path d="M13 20h9l-4.500 4z" fill="#000" /></Ico></span>
            <span className="flex w-[27px] justify-center"><Ico size={18}><path d="M1 2h22l-8 10v10h-6V12z" fill="#7ea6cc" stroke="#5a7f9f" /><path d="M1 2h22l-2 3H3z" fill="#f0d84a" /></Ico></span>
            <span className="flex w-[27px] justify-center"><Ico size={18}><text x="0" y="15" fontSize="24" fontFamily="Liberation Serif, serif" fill="#7a3f87">&#949;</text><rect x="11" y="13" width="11" height="9" fill="#ccc" stroke="#999" /></Ico></span>
            <span className="flex w-[12px] justify-center"><span className="h-0 w-0 border-x-[4px] border-t-[5px] border-x-transparent border-t-black" /></span>
            <span className="ml-[4px] flex w-[27px] justify-center"><Ico size={18}><rect x="2" y="3" width="14" height="18" fill="#fff" stroke="#999" strokeDasharray="2 1" /><path d="M12 22V10H7l8-8 8 8h-5v12z" transform="rotate(180 15 12)" fill="#5f8cba" /></Ico></span>
            <span className="flex w-[27px] justify-center"><Ico size={18}><rect x="2" y="3" width="14" height="18" fill="#fff" stroke="#999" strokeDasharray="2 1" /><rect x="4" y="8" width="4" height="4" fill="#e9a13a" /><path d="M12 22V10H7l8-8 8 8h-5v12z" fill="#5f8cba" /></Ico></span>
            <span className="flex w-[27px] justify-center"><Ico size={18}><rect x="2" y="2" width="18" height="18" rx="1" fill="#fff" stroke="#888" /><rect x="13" y="15" width="11" height="7" fill="#e0453f" /><path d="M15 18.500h7" stroke="#fff" strokeWidth="2" /></Ico></span>
          </div>
          <div className="min-h-0 flex-1 rounded-[2px] border border-[#bdbdbd] bg-white py-[2px]">
            {rows.map((r, i) => <TreeRow key={i} row={r} />)}
            <div className="relative flex h-[18px] items-center pl-[25px]">
              <VGuide x="left-[10px]" half />
              <span className="absolute left-[10px] top-1/2 h-0 w-[14px] border-t border-dotted border-[#999]" />
              <span className="relative w-[14px]"><Sym>{syms.gest}</Sym></span>
              <span className="relative ml-[6px] text-[11.200px] font-bold">Gestion</span>
            </div>
          </div>
        </div>

        {/* map */}
        <div className="ml-[5px] flex w-[1194px] shrink-0 flex-col pt-px">
          <div className="flex h-[36px] shrink-0 items-center border border-[#a9cfee] bg-[#e4f2fd] pl-[12px] pr-[22px] text-[#2c5aa0]">
            <svg width="20" height="19" viewBox="0 0 20 19" className="block shrink-0"><path d="M3 1h14a2 2 0 0 1 2 2v8a2 2 0 0 1-2 2H9l-4 4 .5-4H3a2 2 0 0 1-2-2V3a2 2 0 0 1 2-2z" fill="#fbfbfb" stroke="#b4b4b4" /></svg>
            <span className="ml-[10px] w-[86px] text-[11.200px] font-bold">Information:</span>
            <span className="text-[11.400px]">Il y a 1 entité sélectionnée dans la couche MODIFICATION PAG. Vous pouvez maintenant vérifier la topologie</span>
            <span className="ml-auto flex h-[17px] w-[17px] items-center justify-center rounded-full bg-[#666]">
              <svg width="9" height="9" viewBox="0 0 9 9"><path d="M1.500 1.500l6 6M7.500 1.500l-6 6" stroke="#fff" strokeWidth="1.800" /></svg>
            </span>
          </div>
          <div className="min-h-0 flex-1 border-x-2 border-b-2 border-[#62a5ea] bg-white">
            <svg viewBox="360 172 1190 788" className="block h-full w-full">
              <polygon points="608,180 1378,174 1443,834 932,957 502,663" fill="#ffff00" stroke="#111" strokeWidth="1.300" />
            </svg>
          </div>
        </div>

        {/* topology dock */}
        <div className="ml-[6px] flex w-[361px] shrink-0 flex-col">
          <div className="flex h-[25px] shrink-0 items-center gap-2 pl-[8px]">
            <GripH className="flex-1" />
            <span>Panneau vérificateur de topologie</span>
            <GripH className="flex-1" />
            <DockBtns />
          </div>
          <div className="flex h-[36px] shrink-0 items-center pl-[3px]">
            <span className="flex w-[26px] justify-center"><Ico size={18}><path d="M2 12l3-2 5 6L21 3l2 1-11 18H9z" fill="#f0d830" stroke="#555" strokeWidth="1" /></Ico></span>
            <span className="flex w-[27px] justify-center"><Ico size={18}><rect x="2" y="2" width="20" height="20" fill="#f6f6f6" stroke="#777" strokeDasharray="2 1.500" /><path d="M7 13l2-2 3 4 8-8 1 1-8 12h-2z" fill="#f0d830" stroke="#555" strokeWidth=".8" /></Ico></span>
            <span className="flex w-[27px] justify-center"><Ico size={18}><path d="M3 3l5-1 2 2-1 5 12 10-3 3L8 11l-5 1-1-3 3 1 3-3-2-2z" fill="#e6e6e6" stroke="#666" /><path d="M13 14l8 7" stroke="#d8b030" strokeWidth="3" /></Ico></span>
          </div>
          <div className="h-[740px] shrink-0 border border-[#bdbdbd] bg-white">
            <div className="grid h-[25px] grid-cols-[100px_100px_1fr] border-b border-[#a0a0a0]">
              {['Erreur', 'Couche', "ID de l'entité"].map((t) => (
                <span key={t} className="flex items-center justify-center border-r border-[#a0a0a0] bg-linear-to-b from-[#fbfbfb] to-[#e4e4e4]">{t}</span>
              ))}
            </div>
          </div>
          <div className="flex h-[26px] items-center pl-[1px] pt-[4px] text-[11.100px]">
            <span className="h-4 w-4 shrink-0 rounded-[2px] border border-[#c4c4c4] bg-[#f6f6f6]" />
            <span className="ml-[4px] w-[130px]">Afficher les erreurs</span>
            <span className="whitespace-nowrap">La topologie n'est pas encore activée</span>
          </div>
        </div>
      </div>

      {/* status bar */}
      <div className="flex h-[30px] shrink-0 items-center pt-[3px]">
        <span className="w-[945px] pl-[6px]">1 entité sélectionnée dans la couche MODIFICATION PAG.</span>
        <span className="w-[74px]">Coordonnée</span>
        <span className="flex h-[23px] w-[280px] items-center justify-center rounded-[2px] border border-[#bbb] bg-white">74442,109850</span>
        <span className="ml-px flex h-[26px] w-[19px] items-center justify-center rounded-[2px] border border-[#aaa] bg-[#e4e4e4]">
          <svg width="14" height="18" viewBox="0 0 14 18"><path d="M3 2c8 3 8 11 0 14M11 2c-8 3-8 11 0 14" fill="none" stroke="#333" strokeWidth="1.500" /><circle cx="7" cy="9" r="2" fill="#333" /></svg>
        </span>
        <span className="ml-[9px] w-[54px]">Échelle</span>
        <span className="flex h-[21px] w-[95px] items-center rounded-[2px] border border-[#bbb] bg-white pl-[4px]">
          1:23 412
          <span className="ml-auto flex h-full w-[14px] items-center justify-center bg-[#eee]"><span className="h-0 w-0 border-x-[3px] border-t-[5px] border-x-transparent border-t-black" /></span>
        </span>
        <span className="ml-[11px] w-[56px]">Rotation</span>
        <span className="flex h-[26px] w-[108px] items-center rounded-[2px] border border-[#bbb] bg-white pl-[4px]">
          0,0
          <span className="ml-auto flex h-full w-[18px] flex-col items-center justify-around bg-[#f2f2f2]">
            <span className="h-0 w-0 border-x-[3px] border-b-[5px] border-x-transparent border-b-black" />
            <span className="h-0 w-0 border-x-[3px] border-t-[5px] border-x-transparent border-t-black" />
          </span>
        </span>
        <span className="ml-[5px]"><Cross /></span>
        <span className="ml-[6px] w-[61px]">Rendu</span>
        <span className="w-[14px]">
          <svg width="14" height="16" viewBox="0 0 14 16" className="block"><ellipse cx="7" cy="8" rx="6.500" ry="7.500" fill="#666" /><path d="M0 8h14M1 4h12M1 12h12M7 0v16M7 0c-5 4-5 12 0 16M7 0c5 4 5 12 0 16" stroke="#eee" strokeWidth=".8" fill="none" /></svg>
        </span>
        <span className="ml-[4px] w-[133px] whitespace-nowrap">EPSG:2169 (OTF)</span>
        <svg width="20" height="20" viewBox="0 0 20 20" className="block"><path d="M10 1c5 0 9 3 9 8s-4 7-8 7c0 2 0 3-1 3-1-1-2-3-3-3-3-1-6-3-6-7 0-5 4-8 9-8z" fill="#777" /></svg>
      </div>
    </div>
  )
}
